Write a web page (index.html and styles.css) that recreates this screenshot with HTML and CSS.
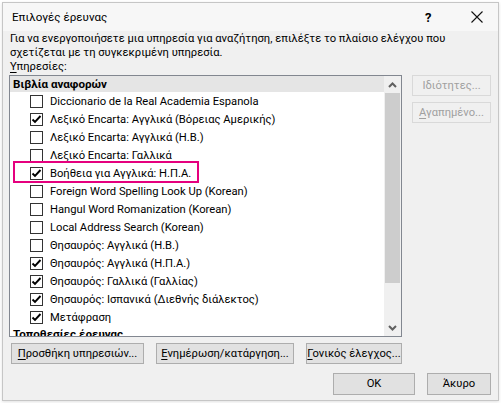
FILE: index.html
```html
<!DOCTYPE html>
<html lang="el">
<head>
    <meta charset="UTF-8">
    <title>Επιλογές έρευνας</title>
    <link rel="stylesheet" href="styles.css">
</head>
<body>
    <div class="dialog">
        <div class="titlebar">
            <span class="title">Επιλογές έρευνας</span>
            <span class="help">?</span>
            <span class="close">
                <svg width="12" height="12" viewBox="0 0 12 12"><path d="M0.5 0.5 L11.5 11.5 M11.5 0.5 L0.5 11.5" stroke="#111" stroke-width="1.1" fill="none"/></svg>
            </span>
        </div>

        <div class="content">
            <p class="intro">Για να ενεργοποιήσετε μια υπηρεσία για αναζήτηση, επιλέξτε το πλαίσιο ελέγχου που<br>σχετίζεται με τη συγκεκριμένη υπηρεσία.</p>
            <div class="label"><u>Υ</u>πηρεσίες:</div>

            <div class="main">
                <div class="listbox">
                    <ul class="list">
                        <li class="group selected">Βιβλία αναφορών</li>
                        <li class="item"><span class="box"></span>Diccionario de la Real Academia Espanola</li>
                        <li class="item checked"><span class="box"></span>Λεξικό Encarta: Αγγλικά (Βόρειας Αμερικής)</li>
                        <li class="item"><span class="box"></span>Λεξικό Encarta: Αγγλικά (Η.Β.)</li>
                        <li class="item"><span class="box"></span>Λεξικό Encarta: Γαλλικά</li>
                        <li class="item checked marked"><span class="box"></span>Βοήθεια για Αγγλικά: Η.Π.Α.</li>
                        <li class="item"><span class="box"></span>Foreign Word Spelling Look Up (Korean)</li>
                        <li class="item"><span class="box"></span>Hangul Word Romanization (Korean)</li>
                        <li class="item"><span class="box"></span>Local Address Search (Korean)</li>
                        <li class="item"><span class="box"></span>Θησαυρός: Αγγλικά (Η.Β.)</li>
                        <li class="item checked"><span class="box"></span>Θησαυρός: Αγγλικά (Η.Π.Α.)</li>
                        <li class="item checked"><span class="box"></span>Θησαυρός: Γαλλικά (Γαλλίας)</li>
                        <li class="item checked"><span class="box"></span>Θησαυρός: Ισπανικά (Διεθνής διάλεκτος)</li>
                        <li class="item checked"><span class="box"></span>Μετάφραση</li>
                        <li class="group">Τοποθεσίες έρευνας</li>
                        <li class="item"><span class="box"></span>Microsoft Bing</li>
                    </ul>
                    <div class="scrollbar">
                        <div class="arrow">
                            <svg width="9" height="6" viewBox="0 0 9 6"><path d="M1 5 L4.5 1.5 L8 5" stroke="#606060" stroke-width="2" fill="none"/></svg>
                        </div>
                        <div class="track">
                            <div class="thumb"></div>
                        </div>
                        <div class="arrow">
                            <svg width="9" height="6" viewBox="0 0 9 6"><path d="M1 1 L4.5 4.5 L8 1" stroke="#606060" stroke-width="2" fill="none"/></svg>
                        </div>
                    </div>
                </div>

                <div class="side">
                    <button class="btn" disabled>Ιδιότητες...</button>
                    <button class="btn" disabled><u>Α</u>γαπημένο...</button>
                </div>
            </div>

            <div class="actions">
                <button class="btn add"><u>Π</u>ροσθήκη υπηρεσιών...</button>
                <button class="btn update"><u>Ε</u>νημέρωση/κατάργηση...</button>
                <button class="btn parental"><u>Γ</u>ονικός έλεγχος...</button>
            </div>

            <div class="footer">
                <button class="btn ok">OK</button>
                <button class="btn cancel">Άκυρο</button>
            </div>
        </div>
    </div>
</body>
</html>
```

FILE: styles.css
```css
body {
    margin: 0;
    background: #ffffff;
    font-family: Roboto, "Liberation Sans", sans-serif;
    font-size: 11.2px;
    color: #000;
}

.dialog {
    margin: 2px;
    width: 497px;
    height: 399px;
    box-sizing: border-box;
    border: 1px solid #c6c6c6;
    background: #f0f0f0;
    box-shadow: 0 1px 3px rgba(0, 0, 0, 0.12);
    display: flex;
    flex-direction: column;
}

/* title bar */
.titlebar {
    height: 28px;
    display: flex;
    align-items: center;
    padding-left: 9px;
    background: #f7f7f7;
}

.title {
    flex: 1;
    font-size: 11.6px;
}

.help {
    font-weight: bold;
    font-size: 13px;
    width: 16px;
    margin-right: 30px;
}

.close {
    display: flex;
    width: 12px;
    margin-right: 15px;
}

/* dialog body */
.content {
    padding: 0 7px 0 6px;
    display: flex;
    flex-direction: column;
}

.intro {
    margin: 1px 0 0;
    padding-left: 1px;
    line-height: 14px;
    white-space: nowrap;
}

.label {
    padding-left: 1px;
    line-height: 14px;
}

u {
    text-decoration-thickness: 1px;
    text-underline-offset: 2px;
}

.main {
    display: flex;
    margin-top: 1px;
}

/* service list */
.listbox {
    width: 393px;
    height: 262px;
    box-sizing: border-box;
    border: 1px solid #828790;
    background: #fff;
    display: flex;
}

.list {
    flex: 1;
    list-style: none;
    margin: 0;
    padding: 0;
    overflow: hidden;
}

.group {
    height: 16px;
    line-height: 16px;
    padding-left: 3px;
    font-weight: bold;
    font-size: 11.6px;
    white-space: nowrap;
}

.group.selected {
    background: #e5e5e5;
}

.item {
    height: 18px;
    display: flex;
    align-items: center;
    padding-left: 20px;
    position: relative;
    white-space: nowrap;
}

.box {
    width: 13px;
    height: 13px;
    box-sizing: border-box;
    border: 1px solid #333;
    background: #fff;
    margin-right: 7px;
    flex: none;
}

.checked .box {
    background: #fff url("data:image/svg+xml,%3Csvg xmlns='http://www.w3.org/2000/svg' width='11' height='11'%3E%3Cpath d='M1.5 5.5 L4 8 L9.5 2' stroke='%23000' stroke-width='1.9' fill='none'/%3E%3C/svg%3E") no-repeat center;
}

/* magenta call-out round one entry */
.marked::after {
    content: "";
    position: absolute;
    left: 3px;
    top: -3px;
    width: 186px;
    height: 22px;
    box-sizing: border-box;
    border: 2px solid #e5007e;
}

.scrollbar {
    width: 17px;
    background: #f0f0f0;
    display: flex;
    flex-direction: column;
}

.arrow {
    height: 17px;
    display: flex;
    align-items: center;
    justify-content: center;
}

.track {
    flex: 1;
}

.thumb {
    height: 190px;
    margin: 0 1px;
    background: #cdcdcd;
}

/* buttons */
.btn {
    font-family: inherit;
    font-size: 11.2px;
    color: #000;
    background: #e1e1e1;
    border: 1px solid #adadad;
    height: 21px;
    padding: 0;
    line-height: 18px;
    white-space: nowrap;
}

.btn:disabled {
    color: #a0a0a0;
    background: #f0f0f0;
    border-color: #d9d9d9;
}

.side {
    margin-left: 10px;
    width: 79px;
    display: flex;
    flex-direction: column;
    gap: 6px;
}

.actions {
    display: flex;
    gap: 12px;
    margin-top: 6px;
    padding-left: 2px;
}

.add {
    width: 133px;
}

.update {
    width: 138px;
}

.parental {
    width: 96px;
}

.footer {
    display: flex;
    justify-content: flex-end;
    gap: 12px;
    margin-top: 9px;
}

.ok {
    width: 82px;
    height: 22px;
}

.cancel {
    width: 64px;
    height: 22px;
}
```
